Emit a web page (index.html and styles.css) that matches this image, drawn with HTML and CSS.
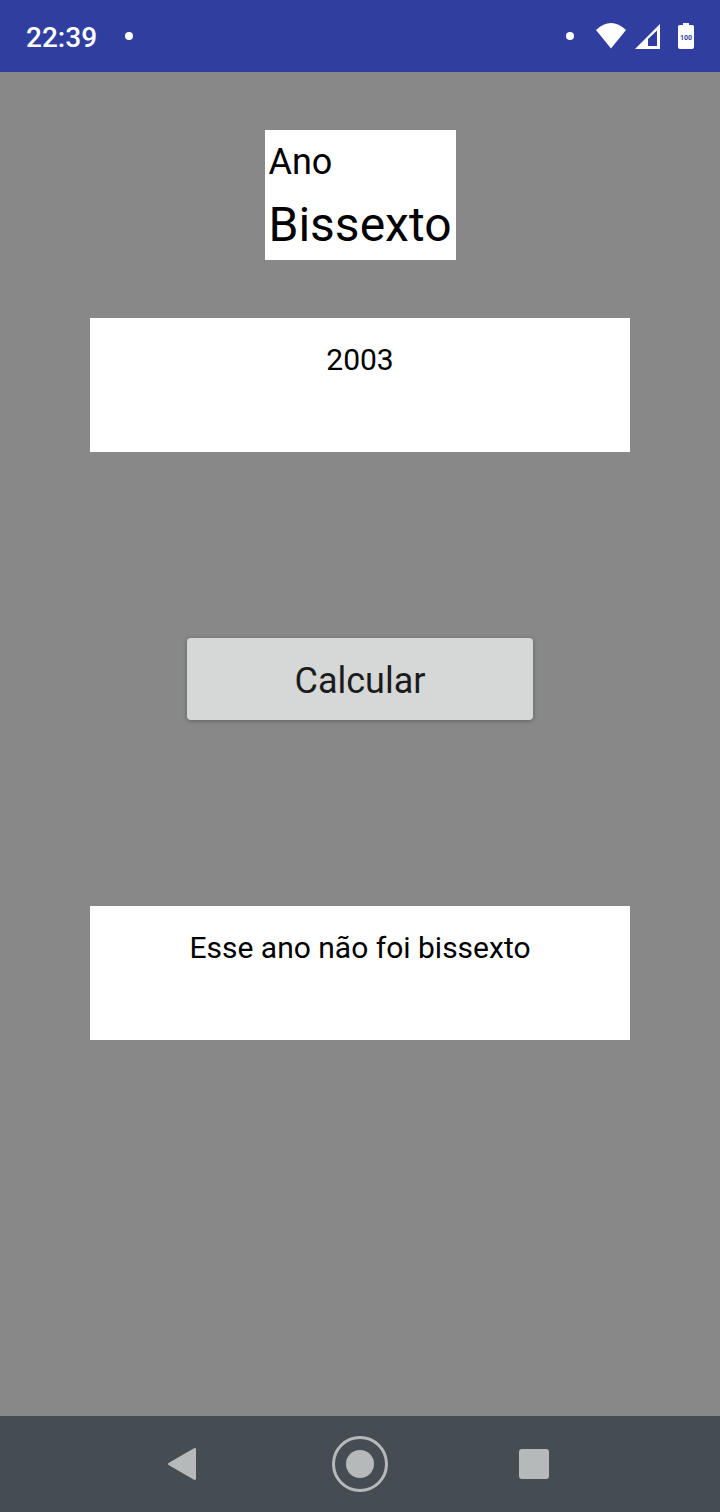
FILE: index.html
```html
<!DOCTYPE html>
<html lang="pt-BR">
<head>
<meta charset="utf-8">
<meta name="viewport" content="width=device-width, initial-scale=1">
<title>Ano Bissexto</title>
<link rel="stylesheet" href="styles.css">
</head>
<body>
<header class="status-bar">
  <div class="status-group">
    <time class="clock">22:39</time>
    <span class="dot"></span>
  </div>
  <div class="status-group status-icons">
    <span class="dot"></span>
    <svg class="icon-wifi" viewBox="0 0 30 26" aria-hidden="true"><path d="M0 7Q15-7 30 7L15 25.500Z"/></svg>
    <svg class="icon-signal" viewBox="0 0 26 26" aria-hidden="true"><path fill-rule="evenodd" d="M26 1V26H1ZM23 7.500L14 16V23H23Z"/></svg>
    <svg class="icon-battery" viewBox="0 0 16 26" aria-hidden="true"><path d="M5 0H11V2H14.500Q16 2 16 4V24Q16 26 14 26H2Q0 26 0 24V4Q0 2 1.500 2H5Z"/><text x="8" y="17" text-anchor="middle">100</text></svg>
  </div>
</header>
<main class="screen">
  <h1 class="title"><span class="title-small">Ano</span><span class="title-large">Bissexto</span></h1>
  <form class="form">
    <input class="field" type="text" inputmode="numeric" value="2003" aria-label="Ano">
    <button class="calculate" type="button">Calcular</button>
    <output class="field">Esse ano não foi bissexto</output>
  </form>
</main>
<nav class="nav-bar" aria-label="Navegação">
  <button class="nav-button" type="button" aria-label="Voltar"><svg viewBox="0 0 56 56" aria-hidden="true"><path d="M10.500 27L36 12.300Q38 11.500 38 13.500V42.500Q38 44.500 36 43.700L10.500 29Q9.500 28 10.500 27Z"/></svg></button>
  <button class="nav-button" type="button" aria-label="Início"><svg viewBox="0 0 56 56" aria-hidden="true"><circle cx="28" cy="28" r="14"/><circle class="ring" cx="28" cy="28" r="26.500"/></svg></button>
  <button class="nav-button" type="button" aria-label="Recentes"><svg viewBox="0 0 56 56" aria-hidden="true"><rect x="13" y="13" width="30" height="30" rx="3"/></svg></button>
</nav>
</body>
</html>
```
FILE: styles.css
```css
* {
  box-sizing: border-box;
}

body {
  margin: 0;
  min-height: 100vh;
  display: flex;
  flex-direction: column;
  background: #888888;
  color: #000000;
  font-family: Roboto, sans-serif;
}

.status-bar {
  display: flex;
  justify-content: space-between;
  align-items: center;
  min-height: 72px;
  padding: 0 26px;
  background: #303f9f;
  color: #ffffff;
}

.status-group {
  display: flex;
  align-items: center;
  gap: 28px;
}

.clock {
  padding-top: 4px;
  font-size: 28px;
  line-height: 32px;
  font-weight: 500;
}

.dot {
  width: 8px;
  height: 8px;
  border-radius: 50%;
  background: #ffffff;
}

.status-icons {
  gap: 0;
}

.status-icons svg {
  height: 26px;
  fill: #ffffff;
}

.icon-wifi {
  width: 30px;
  margin-left: 22px;
}

.icon-signal {
  width: 26px;
  margin-left: 8px;
}

.icon-battery {
  width: 16px;
  margin-left: 18px;
}

.icon-battery text {
  fill: #303f9f;
  font-size: 7px;
  font-weight: 700;
}

.screen {
  flex: 1;
  display: flex;
  flex-direction: column;
  align-items: center;
  gap: 58px;
  padding: 58px 0;
}

.title {
  display: flex;
  flex-direction: column;
  margin: 0;
  padding: 4px 4px 0;
  background: #ffffff;
  font-weight: 400;
}

.title-small {
  font-size: 36px;
  line-height: 56px;
}

.title-large {
  font-size: 48px;
  line-height: 70px;
}

.form {
  width: 75%;
  display: flex;
  flex-direction: column;
  align-items: center;
  gap: 186px;
}

.field {
  display: block;
  width: 100%;
  padding: 24px 16px 74px;
  border: 0;
  border-radius: 0;
  background: #ffffff;
  color: #000000;
  font: 400 30px/36px Roboto, sans-serif;
  text-align: center;
}

.calculate {
  width: 64%;
  padding: 21px 16px 17px;
  border: 0;
  border-radius: 4px;
  background: #d6d7d7;
  box-shadow: 0 1px 4px rgba(0, 0, 0, 0.3);
  color: #1c1c1c;
  font: 400 36px/44px Roboto, sans-serif;
}

.nav-bar {
  display: flex;
  justify-content: center;
  align-items: center;
  gap: 118px;
  min-height: 96px;
  background: #454d52;
}

.nav-button {
  width: 56px;
  height: 56px;
  padding: 0;
  border: 0;
  background: none;
}

.nav-button svg {
  display: block;
  width: 100%;
  height: 100%;
  fill: #b5b9ba;
}

.nav-button .ring {
  fill: none;
  stroke: #b5b9ba;
  stroke-width: 3;
}
```
